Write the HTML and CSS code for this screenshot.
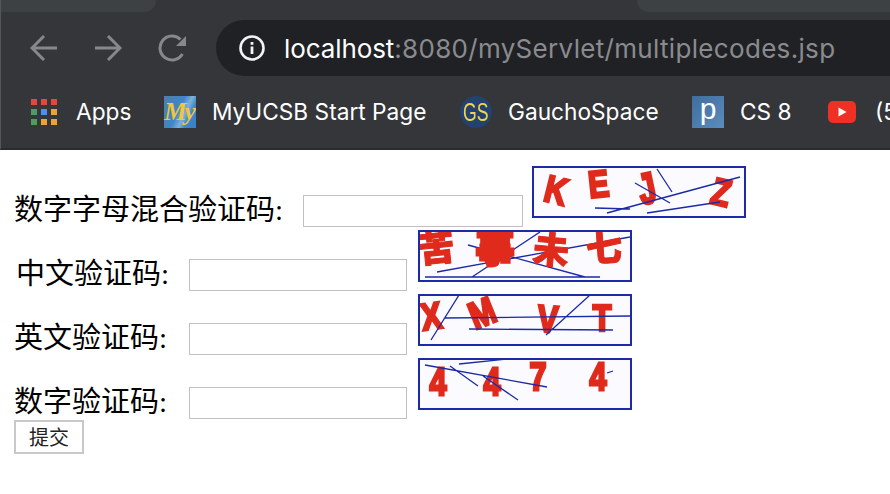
FILE: index.html
```html
<!DOCTYPE html>
<html lang="zh">
<head>
<meta charset="utf-8">
<title>multiplecodes</title>
<link rel="stylesheet" href="styles.css">
</head>
<body>
<header class="chrome">
  <div class="tabstrip">
    <div class="tab tab-left"></div>
    <div class="tab tab-right"></div>
  </div>
  <div class="toolbar">
    <svg class="nav-icon" viewBox="0 0 28 28"><path d="M27 14H3M14 2L2 14l12 12"/></svg>
    <svg class="nav-icon" viewBox="0 0 28 28"><path d="M1 14h24M14 2l12 12-12 12"/></svg>
    <svg class="nav-icon" viewBox="0 0 28 28"><path d="M24.4 20A12 12 0 1 1 22.5 5.5"/><path class="fill" d="M28 2V12H18z"/></svg>
    <div class="address">
      <svg class="info" viewBox="0 0 26 26"><circle cx="13" cy="13" r="11.5"/><rect x="11.6" y="11.5" width="2.8" height="7.5"/><rect x="11.6" y="7" width="2.8" height="2.8"/></svg>
      <span class="url"><span class="host">localhost</span>:8080/myServlet/multiplecodes.jsp</span>
    </div>
  </div>
  <nav class="bookmarks">
    <a class="bookmark apps">
      <span class="apps-grid">
        <i class="r"></i><i class="r"></i><i class="r"></i>
        <i class="g"></i><i class="b"></i><i class="y"></i>
        <i class="g"></i><i class="y"></i><i class="y"></i>
      </span>
      <span class="bm-label">Apps</span>
    </a>
    <a class="bookmark ucsb">
      <span class="fav fav-my"><span class="my-mark">My</span></span>
      <span class="bm-label">MyUCSB Start Page</span>
    </a>
    <a class="bookmark gaucho">
      <span class="fav fav-gs"><span class="gs-mark">GS</span></span>
      <span class="bm-label">GauchoSpace</span>
    </a>
    <a class="bookmark piazza">
      <span class="fav fav-p"><span class="p-mark">p</span></span>
      <span class="bm-label">CS 8</span>
    </a>
    <a class="bookmark yt">
      <svg class="fav-yt" viewBox="0 0 28 22"><rect width="28" height="22" rx="5"/><path d="M10.5 6.5l8 4.5-8 4.5z"/></svg>
      <span class="bm-label">(5</span>
    </a>
  </nav>
</header>
<main class="page">
  <form class="captcha-form">
    <div class="row row-wide">
      <label class="label">数字字母混合验证码:</label>
      <input class="field" type="text">
      <svg class="code" viewBox="2 2 210 48">
        <g class="glyphs">
          <text transform="translate(21 37) rotate(14) scale(.85 1.05)">K</text>
          <text transform="translate(68 31) rotate(-6) scale(.85 1.05)">E</text>
          <text transform="translate(118 37) rotate(-12) scale(.85 1.2)">J</text>
          <text transform="translate(186 39) rotate(14) scale(.85 1.05)">Z</text>
        </g>
        <g class="lines">
          <path d="M63 42L98 43M75 47L208 11M115 47L188 36M125 3L140 26M103 17L138 37"/>
        </g>
      </svg>
    </div>
    <div class="row">
      <label class="label label-inset">中文验证码:</label>
      <input class="field" type="text">
      <svg class="code" viewBox="2 2 210 48">
        <g class="lines">
          <path d="M7 47L182 47M19 42L212 7M54 47L122 2M50 15L167 47"/>
        </g>
        <g class="glyphs glyphs-cjk">
          <text transform="translate(20 31) rotate(-6)">苦</text>
          <text class="blob" transform="translate(77 31)">事</text>
          <text transform="translate(132 33) rotate(5)">未</text>
          <text transform="translate(187 31) rotate(-4)">七</text>
        </g>
      </svg>
    </div>
    <div class="row">
      <label class="label">英文验证码:</label>
      <input class="field" type="text">
      <svg class="code" viewBox="2 2 210 48">
        <g class="glyphs">
          <text transform="translate(15 35) rotate(-8) scale(.85 1.05)">X</text>
          <text transform="translate(69 31) rotate(-22) scale(.85 1.05)">M</text>
          <text transform="translate(129 38) rotate(4) scale(.85 1.05)">V</text>
          <text transform="translate(184 37) scale(.85 1.05)">T</text>
        </g>
        <g class="lines">
          <path d="M27 24L212 22M51 35L195 36M13 46L41 1M128 41L172 1"/>
        </g>
      </svg>
    </div>
    <div class="row">
      <label class="label">数字验证码:</label>
      <input class="field" type="text">
      <svg class="code" viewBox="2 2 210 48">
        <g class="glyphs">
          <text transform="translate(20 37) scale(.85 1.1)">4</text>
          <text transform="translate(74 37) scale(.85 1.1)">4</text>
          <text transform="translate(120 32) scale(.85 1.1)">7</text>
          <text transform="translate(180 32) scale(.85 1.1)">4</text>
        </g>
        <g class="lines">
          <path d="M7 7L129 29M32 8L60 28M41 6L89 1M65 18L100 42M189 15L195 13"/>
        </g>
      </svg>
    </div>
    <button class="submit" type="button">提交</button>
  </form>
</main>
</body>
</html>
```
FILE: styles.css
```css
* { box-sizing: border-box; }
html, body { margin: 0; padding: 0; }
body { width: 890px; height: 494px; overflow: hidden; background: #fff; }

.chrome {
  height: 150px;
  background: #35363a;
  border-bottom: 2px solid #2a2b2e;
  border-left: 1px solid #55565a;
  color: #fff;
  font-family: Inter, "Liberation Sans", sans-serif;
  overflow: hidden;
}
.tabstrip { height: 20px; display: flex; justify-content: space-between; }
.tab { height: 12px; background: #3d4144; }
.tab-left { width: 155px; border-bottom-right-radius: 12px; }
.tab-right { width: 253px; border-bottom-left-radius: 12px; }

.toolbar { height: 56px; display: flex; align-items: center; padding-left: 29px; }
.nav-icon { width: 28px; height: 28px; margin-right: 36px; flex: none; fill: none; stroke: #87888b; stroke-width: 3; }
.nav-icon .fill { fill: #87888b; stroke: none; }
.nav-icon:nth-child(3) { margin-right: 30px; }
.address {
  flex: 1;
  height: 56px;
  margin-right: -40px;
  display: flex;
  align-items: center;
  gap: 19px;
  padding-left: 23px;
  background: #202124;
  border-radius: 28px;
}
.info { width: 26px; height: 26px; flex: none; }
.info circle { fill: none; stroke: #f1f3f4; stroke-width: 2.6; }
.info rect { fill: #f1f3f4; }
.url { font-size: 26px; color: #8a8b8e; white-space: nowrap; letter-spacing: 0.32px; }
.host { color: #fff; letter-spacing: -0.1px; }

.bookmarks { height: 72px; display: flex; align-items: center; white-space: nowrap; padding-left: 30px; font-size: 22.7px; }
.bookmark { display: flex; align-items: center; flex: none; }
.bm-label { margin-bottom: 2px; }
.apps { width: 133px; gap: 19px; }
.ucsb { width: 296px; gap: 16px; }
.gaucho { width: 232px; gap: 16px; }
.piazza { width: 136px; gap: 16px; }
.yt { gap: 19px; }
.apps-grid { display: grid; grid-template-columns: repeat(3, 6px); grid-auto-rows: 6px; gap: 4px; width: 26px; }
.apps-grid i { display: block; }
.apps-grid .r { background: #e8453c; }
.apps-grid .g { background: #4f9d5d; }
.apps-grid .b { background: #4a90f0; }
.apps-grid .y { background: #eba337; }
.fav { width: 32px; height: 32px; flex: none; display: flex; align-items: center; justify-content: center; }
.fav-my {
  background: linear-gradient(115deg, #4f7fa8 0%, #3f86c8 45%, #7fb0d8 62%, #3a86cc 75%, #3a80c4 100%);
}
.my-mark {
  color: #efc63c;
  font: italic bold 25px/30px "Liberation Serif", serif;
  letter-spacing: -2px;
  padding-right: 2px;
}
.fav-gs { border-radius: 50%; background: #24426f; }
.gs-mark {
  color: #f2d54a;
  font: 26px/32px "Liberation Sans", sans-serif;
  transform: scaleX(0.68);
  white-space: nowrap;
}
.fav-p { background: linear-gradient(135deg, #3f6d9e, #5a8dbd); }
.p-mark {
  color: #fff;
  font: 30px/32px "Liberation Sans", sans-serif;
  padding-bottom: 6px;
}
.fav-yt { width: 28px; height: 22px; flex: none; }
.fav-yt rect { fill: #ee3124; }
.fav-yt path { fill: #fff; }

.page { padding: 16px 14px 0; }
.captcha-form { display: flex; flex-direction: column; align-items: flex-start; }
.row { height: 61px; margin-bottom: 3px; display: flex; align-items: flex-start; font: 29px/36px "Liberation Serif", "Noto Sans CJK SC", serif; color: #000; }
.row:last-of-type { margin-bottom: 0; }
.label { width: 175px; margin-top: 26px; white-space: nowrap; }
.row-wide .label { width: 289px; }
.label-inset { padding-left: 2px; }
.field {
  width: 218px;
  height: 32px;
  margin-top: 29px;
  padding: 0;
  border: 1px solid #c0c0c0;
  background: #fff;
}
.row-wide .field { width: 220px; }
.code {
  width: 214px;
  height: 52px;
  margin-left: 11px;
  border: 2px solid #1c2aa6;
  background: #fbfbff;
  overflow: hidden;
  filter: blur(0.4px);
}
.row-wide .code { margin-left: 9px; }
.lines path { fill: none; stroke: #1c2aa6; stroke-width: 1.3; }
.glyphs text {
  fill: #df2a1c;
  stroke: #df2a1c;
  stroke-width: 2.6;
  font: bold 36px "Liberation Sans", sans-serif;
  text-anchor: middle;
}
.glyphs-cjk text { font: 900 36px "Noto Sans CJK SC", sans-serif; stroke-width: 1; }
.glyphs-cjk .blob { stroke-width: 5; }
.submit {
  width: 70px;
  height: 34px;
  margin-top: 1px;
  padding: 0;
  border: 2px solid #c8c8c8;
  background: #fff;
  color: #222;
  font: 20px/1 "Noto Sans CJK SC", sans-serif;
}
```
